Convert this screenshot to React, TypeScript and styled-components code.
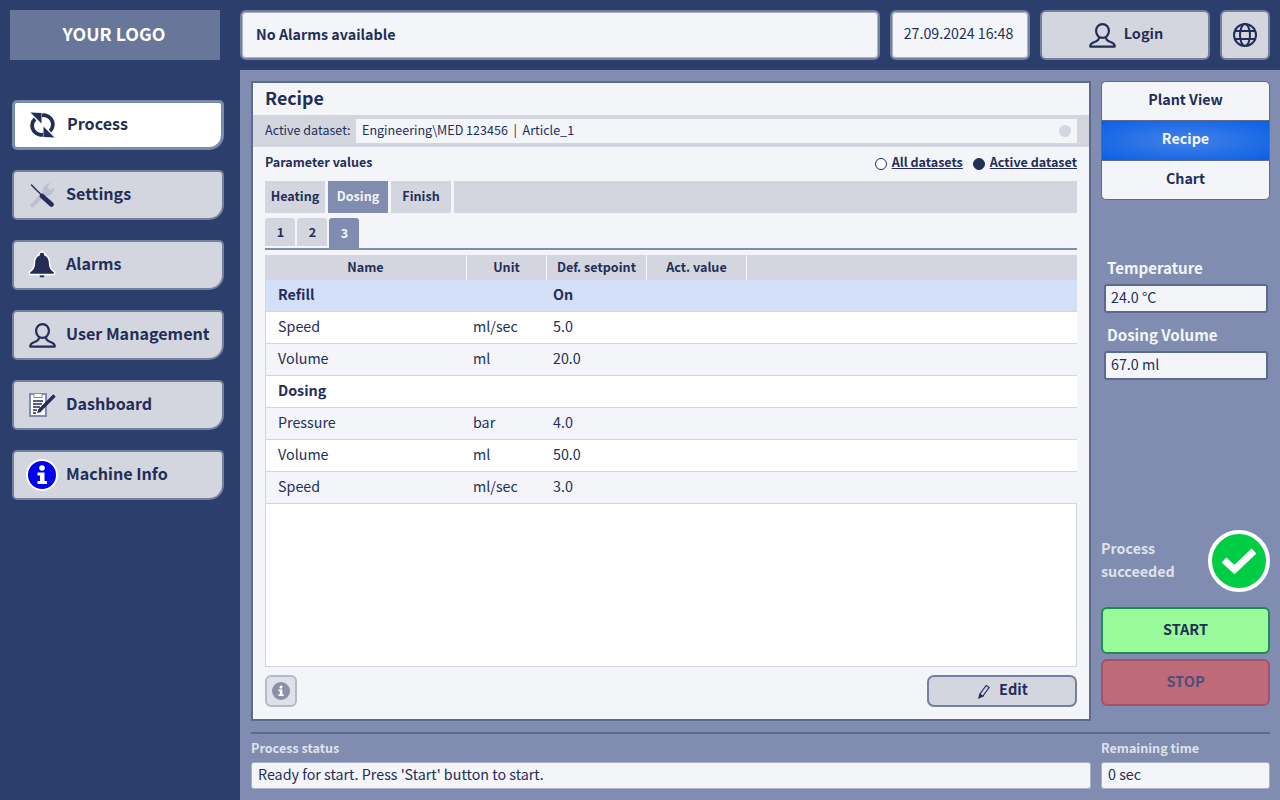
import React from "react";
import styled, { createGlobalStyle } from "styled-components";

const ink = "#232e58";
const font = `"Noto Sans CJK JP", "Noto Sans", sans-serif`;

const Global = createGlobalStyle`
  html, body { margin: 0; padding: 0; }
  body { font-family: ${font}; color: ${ink}; background: #2c3e6b; overflow: hidden; }
  * { box-sizing: border-box; }
`;

const Page = styled.div`
  width: 1280px; height: 800px;
  display: grid;
  grid-template-columns: 240px 1fr;
  grid-template-rows: 70px 1fr;
  background: #2c3e6b;
`;
const Logo = styled.div`
  padding: 10px 20px 10px 10px;
  & > div {
    height: 50px; background: #68769a; color: #fff; font-size: 17.8px; font-weight: 700;
    display: flex; align-items: center; justify-content: center; padding: 0 2px 5px 0;
  }
`;
const TopBar = styled.div`
  display: flex; gap: 10px; padding: 10px 10px 10px 0;
`;
const TopBox = styled.div<{ $w?: number; $grey?: boolean; $center?: boolean }>`
  ${(p) => (p.$w ? `width:${p.$w}px;` : "flex:1;")}
  height: 50px;
  border: 2px solid #75809f;
  border-radius: 6px;
  background: ${(p) => (p.$grey ? "#d3d6df" : "#f3f5f9")};
  ${(p) => (p.$grey ? "" : "box-shadow: inset 0 0 0 1px #aab2c8;")}
  display: flex; align-items: center;
  justify-content: ${(p) => (p.$center ? "center" : "flex-start")};
`;
const AlarmText = styled.span`
  font-size: 14.3px; font-weight: 700; padding: 0 0 3px 14px;
`;
const DateText = styled.span`
  font-size: 14.2px; padding: 0 3px 4px 0;
`;
const LoginText = styled.span`
  font-size: 14.5px; font-weight: 700; margin-left: 8px; padding-bottom: 5px;
`;
const LoginInner = styled.span`
  display: flex; align-items: center; margin-left: 2px;
`;
const Side = styled.nav`
  display: flex; flex-direction: column; gap: 20px; padding: 30px 16px 0 12px;
`;
const NavBtn = styled.div<{ $active?: boolean }>`
  height: 50px;
  display: flex; align-items: center;
  border: ${(p) => (p.$active ? "3px solid #7a8cae" : "2px solid #75809f")};
  border-radius: 5px 5px 15px 5px;
  background: ${(p) => (p.$active ? "#fff" : "#d3d6df")};
  padding-left: ${(p) => (p.$active ? "11px" : "12px")};
  font-size: 16.1px; font-weight: 700;
  white-space: nowrap;
`;
const NavIcon = styled.span<{ $gap?: number }>`
  width: 32px; display: flex; justify-content: center; align-items: center; flex: none;
  margin-right: ${(p) => p.$gap ?? 8}px;
`;
const NavLabel = styled.span`
  padding-bottom: 5px;
`;
const Main = styled.main`
  background: #808db0;
  display: grid;
  grid-template-columns: 840px 169px;
  grid-template-rows: 640px auto auto;
  column-gap: 10px;
  padding: 11px 10px 0 11px;
  align-content: start;
`;
const Panel = styled.section`
  border: 2px solid #5b6a8f;
  background: #f3f5f9;
  display: flex; flex-direction: column;
`;
const PanelTitle = styled.h1`
  margin: 0; height: 32px; padding: 0 0 0 12px;
  font-size: 17.8px; font-weight: 700; line-height: 28px;
`;
const DatasetBar = styled.div`
  height: 32px; background: #d3d6df; display: flex; align-items: center;
  padding: 0 12px; font-size: 12.55px; white-space: nowrap;
`;
const DatasetLabel = styled.span`
  width: 91px; flex: none; padding-bottom: 4px;
`;
const DatasetInput = styled.div`
  flex: 1; height: 24px; background: #f3f5f9; display: flex; align-items: center;
  padding: 0 6px; justify-content: space-between;
  & > span:first-child { padding-bottom: 4px; }
`;
const Dot = styled.span`
  width: 12px; height: 12px; border-radius: 50%; background: #d3d6df;
`;
const ParamHead = styled.div`
  height: 34px; padding: 0 12px; display: flex; align-items: center; justify-content: space-between;
  font-size: 12.55px; font-weight: 700;
`;
const ParamTitle = styled.span`
  padding-bottom: 5px;
`;
const RadioGroup = styled.div`
  display: flex; align-items: center; gap: 10px;
`;
const RadioItem = styled.span`
  display: flex; align-items: center; gap: 5px;
`;
const RadioText = styled.span`
  text-decoration: underline; padding-bottom: 5px;
`;
const Radio = styled.span<{ $on?: boolean }>`
  width: 12px; height: 12px; border-radius: 50%;
  border: 1px solid ${ink}; background: ${(p) => (p.$on ? ink : "#fff")};
`;
const Tabs = styled.div`
  margin: 0 12px; display: flex; gap: 3px; height: 32px;
`;
const Tab = styled.div<{ $on?: boolean; $fill?: boolean }>`
  ${(p) => (p.$fill ? "flex:1;" : "width:60px;")}
  background: ${(p) => (p.$on ? "#808db0" : "#d3d6df")};
  color: ${(p) => (p.$on ? "#f3f5f9" : ink)};
  display: flex; align-items: center; justify-content: center;
  font-size: 12.6px; font-weight: 700; padding-bottom: 4px;
`;
const SubTabs = styled.div`
  margin: 5px 12px 0; height: 32px; display: flex; gap: 2px;
  border-bottom: 2px solid #808db0;
`;
const SubTab = styled.div<{ $on?: boolean }>`
  width: 30px; height: ${(p) => (p.$on ? "30px" : "28px")};
  background: ${(p) => (p.$on ? "#808db0" : "#d3d6df")};
  color: ${(p) => (p.$on ? "#f3f5f9" : ink)};
  border-radius: 3px 3px 0 0;
  display: flex; align-items: center; justify-content: center;
  font-size: 12.6px; font-weight: 700; padding: 0 0 2px 1px;
`;
const TableWrap = styled.div`
  margin: 5px 12px 0; height: 412px; background: #fff;
  border: 1px solid #d3d6df; border-top: none;
`;
const HeadRow = styled.div`
  height: 25px; background: #d3d6df; display: grid;
  grid-template-columns: 202px 80px 100px 100px 1fr; margin: 0 -1px;
  font-size: 12.6px; font-weight: 700;
`;
const HeadCell = styled.div`
  display: flex; align-items: center; justify-content: center; padding-bottom: 2px;
  border-right: 1.5px solid #f3f5f9;
  &:last-child { border-right: none; }
`;
const Row = styled.div<{ $bg: string; $bold?: boolean }>`
  height: 32px; display: grid; background: ${(p) => p.$bg};
  grid-template-columns: 201px 80px 100px 100px 1fr; margin-right: -1px;
  border-bottom: 1px solid #d3d6df;
  font-size: 14.3px; font-weight: ${(p) => (p.$bold ? 700 : 400)};
  align-items: center; padding-bottom: 4px;
`;
const Cell = styled.div<{ $first?: boolean }>`
  padding-left: ${(p) => (p.$first ? "12px" : "6px")};
`;
const PanelFoot = styled.div`
  margin: 8px 12px 0; display: flex; justify-content: space-between;
`;
const InfoBtn = styled.div`
  width: 32px; height: 32px; border: 2px solid #b5bacb; border-radius: 6px; background: #dfe1e8;
  display: flex; align-items: center; justify-content: center;
`;
const EditBtn = styled.div`
  width: 150px; height: 32px; border: 2px solid #75809f; border-radius: 7px; background: #d3d6df;
  display: flex; align-items: center; justify-content: center; gap: 9px;
  font-size: 14.6px; font-weight: 700; padding-left: 2px;
  & > span { padding-bottom: 5px; }
`;
const RightCol = styled.aside`
  display: flex; flex-direction: column;
`;
const Segments = styled.div`
  height: 119px; border: 1px solid #5b6a8f; border-radius: 5px; background: #f3f5f9;
  overflow: hidden; display: flex; flex-direction: column;
`;
const Segment = styled.div<{ $on?: boolean }>`
  flex: 1; display: flex; align-items: center; justify-content: center;
  font-size: 14.3px; font-weight: 700; padding-bottom: 5px;
  & + & { border-top: 1px solid #5b6a8f; }
  ${(p) =>
    p.$on
      ? "color:#f3f5f9;background:radial-gradient(ellipse at center,#4382e6 0%,#0b5fe6 100%);"
      : ""}
`;
const Measures = styled.div`
  margin-top: 56px; padding: 0 2px 0 3px;
`;
const MeasureLabel = styled.div`
  color: #f3f5f9; font-size: 15.1px; font-weight: 700; line-height: 22px; padding-left: 3px;
`;
const MeasureBox = styled.div`
  height: 29px; margin: 6px 0 10px; border: 2px solid #5b6a8f; border-radius: 3px; background: #f3f5f9;
  display: flex; align-items: center; padding: 0 0 4px 5px; font-size: 14.3px;
`;
const Status = styled.div`
  margin-top: 140px; height: 62px; display: flex; justify-content: space-between; align-items: center;
`;
const StatusText = styled.div`
  color: #dfe2ea; font-size: 14.3px; font-weight: 700; line-height: 23px; margin-top: -5px;
`;
const Ok = styled.div`
  width: 62px; height: 62px; border-radius: 50%; border: 4px solid #fff; background: #00cc44;
  display: flex; align-items: center; justify-content: center;
`;
const Action = styled.div<{ $bg: string; $b: string; $c: string; $top: number }>`
  height: 47px; border: 2px solid ${(p) => p.$b}; background: ${(p) => p.$bg}; color: ${(p) => p.$c};
  border-radius: 6px; display: flex; align-items: center; justify-content: center;
  font-size: 14.5px; font-weight: 700; padding-bottom: 5px;
  margin-top: ${(p) => p.$top}px;
`;
const Rule = styled.div`
  grid-column: 1 / -1; height: 2px; background: #5b6a8f; margin-top: 11px;
`;
const Field = styled.div`
  padding-top: 4px;
`;
const FieldLabel = styled.div`
  color: #dfe2ea; font-size: 12.6px; font-weight: 700; line-height: 20px;
`;
const FieldBox = styled.div`
  height: 27px; margin-top: 4px; background: #f3f5f9; border-radius: 3px; border: 1px solid #aab2c8;
  display: flex; align-items: center; padding: 0 0 4px 6px; font-size: 14.3px;
`;

const UserIcon = () => (
  <svg width="27" height="25" viewBox="0 0 27 25" fill="none" stroke={ink} strokeWidth="2.2">
    <ellipse cx="13.5" cy="8" rx="6.4" ry="6.9" />
    <path d="M10 14.5 C10 17 8.5 18 5.5 19 C2.5 20 1.2 21.5 1.2 23.6 H25.8 C25.8 21.5 24.5 20 21.5 19 C18.5 18 17 17 17 14.5" strokeLinejoin="round" />
  </svg>
);
const SyncIcon = () => (
  <svg width="25" height="26" viewBox="0 0 25 26" fill="none">
    <path d="M9 4.4 A9.2 9.2 0 0 1 20 19" stroke={ink} strokeWidth="3.8" />
    <path d="M16 21.6 A9.2 9.2 0 0 1 5 7" stroke={ink} strokeWidth="3.8" />
    <path
      d="M0.5 0.5 L11.5 1 L11.5 11.5 Z M24.5 25.5 L13.5 25 L13.5 14.5 Z"
      fill={ink}
      stroke="#fff"
      strokeWidth="0.9"
      paintOrder="stroke"
    />
  </svg>
);
const ToolsIcon = () => (
  <svg width="25" height="26" viewBox="0 0 25 26" fill="none">
    <path d="M2.5 23.5 L14 11.5" stroke="#bcc0ce" strokeWidth="4" strokeLinecap="round" />
    <path d="M13 13 C11 7 14.5 2 20.5 1 L17.5 5 L19.5 8 L24.5 5.5 C24 11.5 19 15 15 13.5 Z" fill="#bcc0ce" />
    <path d="M1.5 3 L11 12.5" stroke={ink} strokeWidth="1.5" strokeLinecap="round" />
    <path d="M12 14 L21.5 22.5" stroke={ink} strokeWidth="4.8" strokeLinecap="round" />
  </svg>
);
const BellIcon = () => (
  <svg width="28" height="28" viewBox="0 0 28 28" fill={ink} stroke="#fff" strokeWidth="1.4">
    <path d="M14 1 C16 1 17 2.3 17 4 C20.5 5.5 21.5 8.5 21.5 12 C21.5 16 22.5 18.5 26.5 21 V23.5 H1.5 V21 C5.5 18.5 6.5 16 6.5 12 C6.5 8.5 7.5 5.5 11 4 C11 2.3 12 1 14 1 Z" />
    <path d="M11 24 H17 C17 26 16 27 14 27 C12 27 11 26 11 24 Z" stroke="#fff" strokeWidth="0.8" />
  </svg>
);
const BoardIcon = () => (
  <svg width="27" height="24" viewBox="0 0 27 24" fill="none">
    <rect x="1" y="1" width="16" height="22" fill="#fff" stroke="#808db0" strokeWidth="2" />
    <rect x="5" y="0.5" width="8" height="4" fill="#fff" stroke="#808db0" />
    <path d="M4 8 H14 M4 11 H13 M4 14 H11 M4 17 H8 M4 20 H7" stroke={ink} strokeWidth="1.4" />
    <path d="M10.5 17.5 L25.5 2.5" stroke={ink} strokeWidth="3.4" />
    <path d="M8 20 L9.5 16 L12.5 19 Z" fill={ink} />
  </svg>
);
const InfoGlyph = ({ s, bg, ring }: { s: number; bg: string; ring?: string }) => (
  <svg width={s} height={s} viewBox="0 0 32 32">
    <circle cx="16" cy="16" r={ring ? 15 : 16} fill={bg} stroke={ring ?? "none"} strokeWidth={ring ? 2 : 0} />
    <circle cx="16" cy="9" r="2.8" fill="#fff" />
    <path d="M11.5 13.5 H18.5 V22 H21 V25 H11.5 V22 H14 V16.5 H11.5 Z" fill="#fff" />
  </svg>
);
const GlobeIcon = () => (
  <svg width="24" height="24" viewBox="0 0 24 24" fill="none" stroke={ink} strokeWidth="2">
    <circle cx="12" cy="12" r="11" />
    <ellipse cx="12" cy="12" rx="5" ry="11" />
    <path d="M1.5 8 H22.5 M1.5 16 H22.5" />
  </svg>
);
const PenIcon = () => (
  <svg width="12" height="15" viewBox="0 0 14 16" fill="none" stroke={ink} strokeWidth="1.3">
    <path d="M9.5 1 L13 3.2 L5.5 13.5 L2 11.3 Z" />
    <path d="M2 11.3 L1 15.5 L5.5 13.5 Z" fill={ink} />
  </svg>
);

const rows: { c: string[]; bold?: boolean; bg: string }[] = [
  { c: ["Refill", "", "On"], bold: true, bg: "#d3e0f8" },
  { c: ["Speed", "ml/sec", "5.0"], bg: "#fff" },
  { c: ["Volume", "ml", "20.0"], bg: "#f3f5f9" },
  { c: ["Dosing", "", ""], bold: true, bg: "#fff" },
  { c: ["Pressure", "bar", "4.0"], bg: "#f3f5f9" },
  { c: ["Volume", "ml", "50.0"], bg: "#fff" },
  { c: ["Speed", "ml/sec", "3.0"], bg: "#f3f5f9" },
];

export default function App() {
  return (
    <Page>
      <Global />
      <Logo><div>YOUR LOGO</div></Logo>
      <TopBar>
        <TopBox><AlarmText>No Alarms available</AlarmText></TopBox>
        <TopBox $w={140} $center><DateText>27.09.2024 16:48</DateText></TopBox>
        <TopBox $w={170} $grey $center><LoginInner><UserIcon /><LoginText>Login</LoginText></LoginInner></TopBox>
        <TopBox $w={50} $grey $center><GlobeIcon /></TopBox>
      </TopBar>
      <Side>
        <NavBtn $active><NavIcon $gap={9}><SyncIcon /></NavIcon><NavLabel>Process</NavLabel></NavBtn>
        <NavBtn><NavIcon><ToolsIcon /></NavIcon><NavLabel>Settings</NavLabel></NavBtn>
        <NavBtn><NavIcon><BellIcon /></NavIcon><NavLabel>Alarms</NavLabel></NavBtn>
        <NavBtn><NavIcon><UserIcon /></NavIcon><NavLabel>User Management</NavLabel></NavBtn>
        <NavBtn><NavIcon><BoardIcon /></NavIcon><NavLabel>Dashboard</NavLabel></NavBtn>
        <NavBtn><NavIcon><InfoGlyph s={32} bg="#0000ee" ring="#fff" /></NavIcon><NavLabel>Machine Info</NavLabel></NavBtn>
      </Side>
      <Main>
        <Panel>
          <PanelTitle>Recipe</PanelTitle>
          <DatasetBar>
            <DatasetLabel>Active dataset:</DatasetLabel>
            <DatasetInput><span>Engineering\MED 123456 &nbsp;|&nbsp; Article_1</span><Dot /></DatasetInput>
          </DatasetBar>
          <ParamHead>
            <ParamTitle>Parameter values</ParamTitle>
            <RadioGroup>
              <RadioItem><Radio /><RadioText>All datasets</RadioText></RadioItem>
              <RadioItem><Radio $on /><RadioText>Active dataset</RadioText></RadioItem>
            </RadioGroup>
          </ParamHead>
          <Tabs>
            <Tab>Heating</Tab>
            <Tab $on>Dosing</Tab>
            <Tab>Finish</Tab>
            <Tab $fill />
          </Tabs>
          <SubTabs>
            <SubTab>1</SubTab>
            <SubTab>2</SubTab>
            <SubTab $on>3</SubTab>
          </SubTabs>
          <TableWrap>
            <HeadRow>
              <HeadCell>Name</HeadCell>
              <HeadCell>Unit</HeadCell>
              <HeadCell>Def. setpoint</HeadCell>
              <HeadCell>Act. value</HeadCell>
              <HeadCell />
            </HeadRow>
            {rows.map((r, i) => (
              <Row key={i} $bg={r.bg} $bold={r.bold}>
                <Cell $first>{r.c[0]}</Cell>
                <Cell>{r.c[1]}</Cell>
                <Cell>{r.c[2]}</Cell>
              </Row>
            ))}
          </TableWrap>
          <PanelFoot>
            <InfoBtn><InfoGlyph s={18} bg="#8a90a8" /></InfoBtn>
            <EditBtn><PenIcon /><span>Edit</span></EditBtn>
          </PanelFoot>
        </Panel>
        <RightCol>
          <Segments>
            <Segment>Plant View</Segment>
            <Segment $on>Recipe</Segment>
            <Segment>Chart</Segment>
          </Segments>
          <Measures>
            <MeasureLabel>Temperature</MeasureLabel>
            <MeasureBox>24.0 °C</MeasureBox>
            <MeasureLabel>Dosing Volume</MeasureLabel>
            <MeasureBox>67.0 ml</MeasureBox>
          </Measures>
          <Status>
            <StatusText>Process<br />succeeded</StatusText>
            <Ok>
              <svg width="36" height="28" viewBox="0 0 36 28">
                <path d="M3 13 L13.5 22.5 L33 4" fill="none" stroke="#fff" strokeWidth="7" />
              </svg>
            </Ok>
          </Status>
          <Action $top={15} $bg="#98fa98" $b="#1f8a58" $c={ink}>START</Action>
          <Action $top={5} $bg="#be6a78" $b="#a5506a" $c="#4b5078">STOP</Action>
        </RightCol>
        <Rule />
        <Field>
          <FieldLabel>Process status</FieldLabel>
          <FieldBox>Ready for start. Press 'Start' button to start.</FieldBox>
        </Field>
        <Field>
          <FieldLabel>Remaining time</FieldLabel>
          <FieldBox>0 sec</FieldBox>
        </Field>
      </Main>
    </Page>
  );
}
